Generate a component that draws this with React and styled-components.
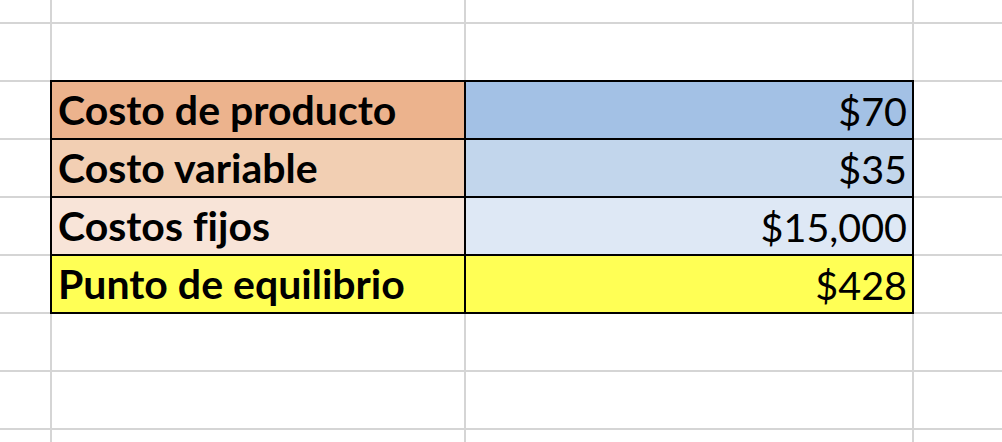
import React from "react";
import styled, { createGlobalStyle } from "styled-components";

const GlobalStyle = createGlobalStyle`
  html, body {
    margin: 0;
    padding: 0;
    background: #ffffff;
    overflow: hidden;
  }
`;

const Sheet = styled.div`
  display: grid;
  grid-template-columns: 50px 412px 446px 1fr;
  grid-template-rows: 22px repeat(8, 56px);
  gap: 2px;
  width: 1002px;
  height: 442px;
  overflow: hidden;
  background: #d5d5d5;
  font-family: "Lato", "Open Sans", sans-serif;
  color: #000;
`;

const Cell = styled.div`
  display: flex;
  align-items: flex-end;
  justify-content: ${({ $align }) => ($align === "right" ? "flex-end" : "flex-start")};
  padding: 0 5px 4px 6px;
  background: ${({ $bg }) => $bg || "#ffffff"};
  outline: ${({ $boxed }) => ($boxed ? "2px solid #000" : "none")};
  font-size: ${({ $bold }) => ($bold ? "41px" : "39.5px")};
  line-height: 1.2;
  font-weight: ${({ $bold }) => ($bold ? 700 : 400)};
  font-variant-ligatures: none;
  white-space: nowrap;
  box-sizing: border-box;
`;

const rows = [
  { label: "Costo de producto", value: "$70", labelBg: "#ecb38d", valueBg: "#a3c1e5" },
  { label: "Costo variable", value: "$35", labelBg: "#f2cfb3", valueBg: "#c2d6ec" },
  { label: "Costos fijos", value: "$15,000", labelBg: "#f8e4d8", valueBg: "#dee8f5" },
  { label: "Punto de equilibrio", value: "$428", labelBg: "#ffff55", valueBg: "#ffff55" },
];

const EmptyRow = () => (
  <>
    <Cell />
    <Cell />
    <Cell />
    <Cell />
  </>
);

export default function App() {
  return (
    <>
      <GlobalStyle />
      <Sheet>
        <EmptyRow />
        <EmptyRow />
        {rows.map((r) => (
          <React.Fragment key={r.label}>
            <Cell />
            <Cell $bg={r.labelBg} $boxed $bold>
              {r.label}
            </Cell>
            <Cell $bg={r.valueBg} $boxed $align="right">
              {r.value}
            </Cell>
            <Cell />
          </React.Fragment>
        ))}
        <EmptyRow />
        <EmptyRow />
        <EmptyRow />
      </Sheet>
    </>
  );
}
